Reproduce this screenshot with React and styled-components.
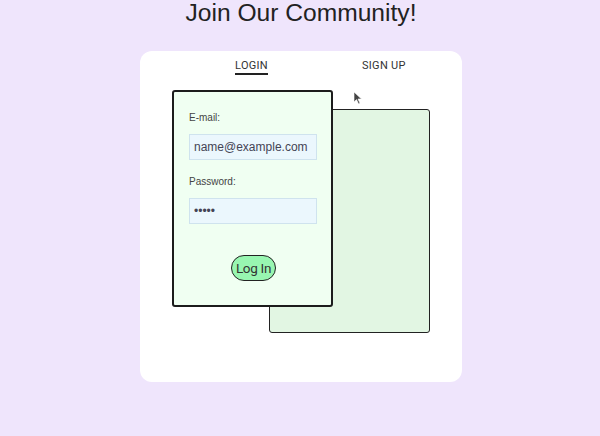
import React from "react";
import styled, { createGlobalStyle } from "styled-components";

const GlobalStyle = createGlobalStyle`
  html, body {
    margin: 0;
    padding: 0;
    background: #efe5fc;
    font-family: "Liberation Sans", Arial, sans-serif;
  }
`;

const Page = styled.div`
  width: 600px;
  height: 436px;
  display: flex;
  flex-direction: column;
  align-items: center;
  background: #efe5fc;
  overflow: hidden;
`;

const Title = styled.h1`
  margin: -2px 0 0 2px;
  font-size: 24.6px;
  font-weight: 400;
  line-height: 30px;
  color: #222;
`;

const Card = styled.div`
  margin: 23px 0 0 2px;
  width: 322px;
  height: 331px;
  background: #fff;
  border-radius: 12px;
  box-sizing: border-box;
  position: relative;
`;

const Tabs = styled.div`
  display: flex;
  gap: 94px;
  padding: 8px 0 0 95px;
`;

const Tab = styled.div`
  font-family: Roboto, "Liberation Sans", sans-serif;
  font-size: 11px;
  letter-spacing: 0.3px;
  color: #333;
  padding-bottom: 1px;
  line-height: 13px;
  border-bottom: 2px solid ${(p) => (p.$active ? "#222" : "transparent")};
`;

const Stage = styled.div`
  display: grid;
  margin: 15px 0 0 32px;
`;

const BackSheet = styled.div`
  grid-area: 1 / 1;
  margin: 19px 0 0 97px;
  width: 161px;
  height: 224px;
  box-sizing: border-box;
  background: #e2f6e3;
  border: 1.5px solid #222;
  border-radius: 3px;
`;

const FrontSheet = styled.form`
  grid-area: 1 / 1;
  z-index: 1;
  width: 161px;
  height: 217px;
  box-sizing: border-box;
  background: #f0fff2;
  border: 2px solid #1c1c1c;
  border-radius: 3px;
  padding: 20px 14px 0 15px;
  display: flex;
  flex-direction: column;
`;

const Label = styled.label`
  font-size: 10px;
  color: #444;
  line-height: 12px;
  margin-bottom: 10px;
`;

const Input = styled.input`
  width: 128px;
  height: 26px;
  box-sizing: border-box;
  background: #ebf7fd;
  border: 1px solid #cfe3ee;
  padding: 0 4px;
  font-family: "Liberation Sans", Arial, sans-serif;
  font-size: 12px;
  color: #445;
  margin-bottom: 16px;
  outline: none;
`;

const Button = styled.button`
  align-self: center;
  margin: 15px 0 0 1px;
  height: 26px;
  padding: 0 4px;
  background: #98f6b1;
  border: 1.5px solid #222;
  border-radius: 13px;
  font-family: Roboto, "Liberation Sans", sans-serif;
  font-size: 13.5px;
  letter-spacing: -0.3px;
  color: #333;
`;

const Pointer = styled.svg`
  position: absolute;
  left: 213px;
  top: 40px;
`;

export default function App() {
  return (
    <>
      <GlobalStyle />
      <Page>
        <Title>Join Our Community!</Title>
        <Card>
          <Tabs>
            <Tab $active>LOGIN</Tab>
            <Tab>SIGN UP</Tab>
          </Tabs>
          <Stage>
            <BackSheet />
            <FrontSheet onSubmit={(e) => e.preventDefault()}>
              <Label>E-mail:</Label>
              <Input type="text" defaultValue="name@example.com" />
              <Label>Password:</Label>
              <Input type="password" defaultValue="12345" />
              <Button type="submit">Log In</Button>
            </FrontSheet>
          </Stage>
          <Pointer width="10" height="14" viewBox="0 0 10 14">
            <path d="M1 1 L1 11 L3.5 8.6 L5.6 13 L7 12.3 L5 8 L8.5 8 Z" fill="#444" stroke="#fff" strokeWidth="0.6" />
          </Pointer>
        </Card>
      </Page>
    </>
  );
}
